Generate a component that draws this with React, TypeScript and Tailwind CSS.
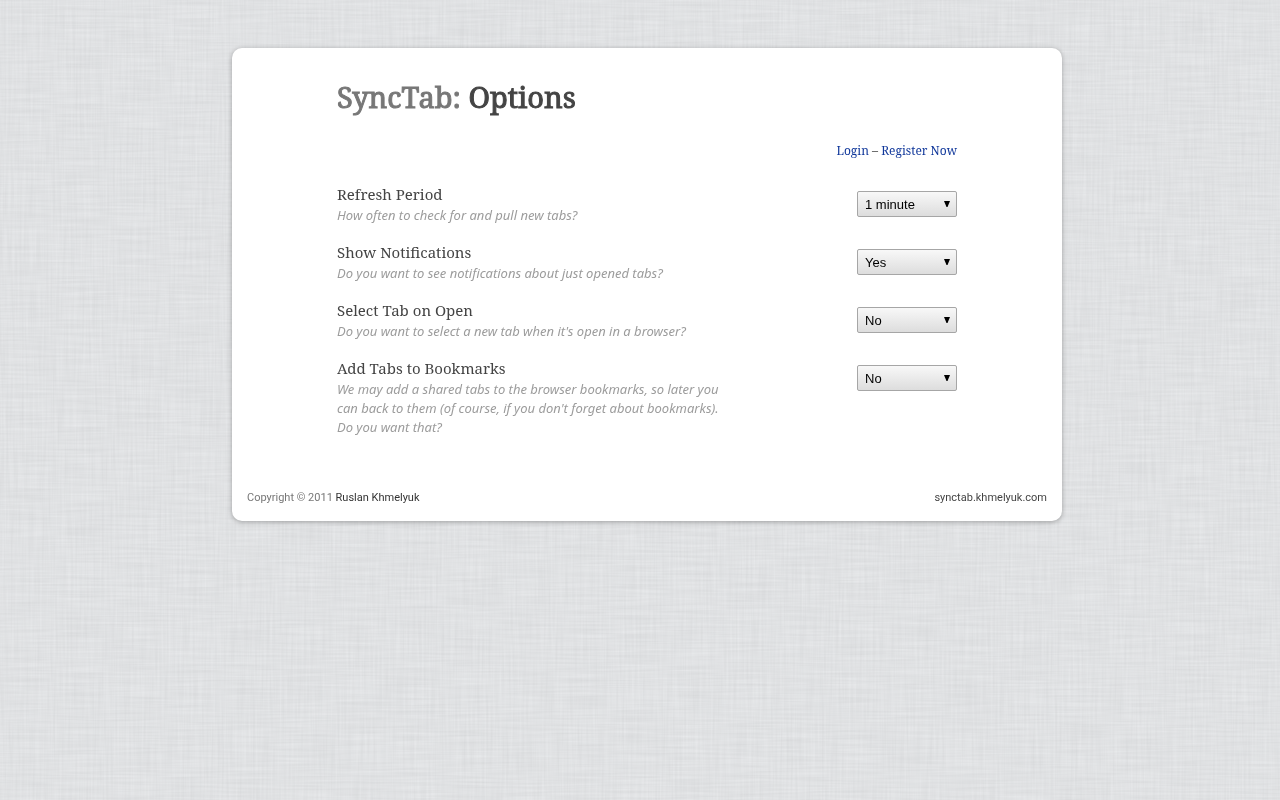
type Option = {
  id: string;
  title: string;
  description: string;
  value: string;
  choices: string[];
};

const options: Option[] = [
  {
    id: "refresh-period",
    title: "Refresh Period",
    description: "How often to check for and pull new tabs?",
    value: "1 minute",
    choices: ["1 minute", "5 minutes", "15 minutes"],
  },
  {
    id: "show-notifications",
    title: "Show Notifications",
    description: "Do you want to see notifications about just opened tabs?",
    value: "Yes",
    choices: ["Yes", "No"],
  },
  {
    id: "select-tab",
    title: "Select Tab on Open",
    description: "Do you want to select a new tab when it's open in a browser?",
    value: "No",
    choices: ["Yes", "No"],
  },
  {
    id: "add-bookmarks",
    title: "Add Tabs to Bookmarks",
    description:
      "We may add a shared tabs to the browser bookmarks, so later you can back to them (of course, if you don't forget about bookmarks). Do you want that?",
    value: "No",
    choices: ["Yes", "No"],
  },
];

/* Woven linen: fine horizontal and vertical threads over a flat grey. */
function Linen() {
  return (
    <svg className="fixed inset-0 -z-10 h-full w-full" aria-hidden="true">
      <defs>
        <filter id="warp" x="0" y="0" width="100%" height="100%" colorInterpolationFilters="sRGB">
          <feTurbulence type="fractalNoise" baseFrequency="0.45 0.018" numOctaves="2" seed="4" />
          <feColorMatrix values="0.1 0 0 0 0.829  0.1 0 0 0 0.835  0.1 0 0 0 0.842  0 0 0 0 1" />
        </filter>
        <filter id="weft" x="0" y="0" width="100%" height="100%" colorInterpolationFilters="sRGB">
          <feTurbulence type="fractalNoise" baseFrequency="0.018 0.45" numOctaves="2" seed="9" />
          <feColorMatrix values="0.1 0 0 0 0.829  0.1 0 0 0 0.835  0.1 0 0 0 0.842  0 0 0 0 1" />
        </filter>
      </defs>
      <rect width="100%" height="100%" filter="url(#warp)" />
      <rect width="100%" height="100%" filter="url(#weft)" opacity="0.5" />
    </svg>
  );
}

function OptionRow({ option }: { option: Option }) {
  return (
    <div className="flex items-start justify-between gap-4">
      <div className="max-w-[400px]">
        <label
          htmlFor={option.id}
          className="block pb-[2px] font-['Noto_Serif','Droid_Serif','Liberation_Serif',serif] text-[15px] leading-5 text-[#444]"
        >
          {option.title}
        </label>
        <p className="font-['Noto_Sans',sans-serif] text-[13px] leading-[19px] text-[#9c9c9c] italic">
          {option.description}
        </p>
      </div>
      <div className="relative mt-[7px] shrink-0">
        <select
          id={option.id}
          defaultValue={option.value}
          className="block h-[26px] w-[100px] appearance-none rounded-[2px] border border-[#a6a6a6] bg-linear-to-b from-[#f8f8f8] to-[#dddddd] pt-[2px] pr-5 pl-[7px] font-['Liberation_Sans',Arial,sans-serif] text-[13px] text-black"
        >
          {option.choices.map((choice) => (
            <option key={choice}>{choice}</option>
          ))}
        </select>
        <svg
          className="pointer-events-none absolute top-[10px] right-[7px] h-[6px] w-[6px]"
          viewBox="0 0 6 6"
          aria-hidden="true"
        >
          <path d="M0 0H6L3.5 6H2.5Z" fill="#000" />
        </svg>
      </div>
    </div>
  );
}

export default function App() {
  return (
    <div className="relative isolate min-h-screen bg-[#dfe1e3] pt-12 pb-12 pl-[14px]">
      <Linen />
      <div className="mx-auto w-full max-w-[830px] rounded-[10px] bg-white shadow-[0_1px_5px_rgba(0,0,0,0.3)]">
        <main className="mx-auto max-w-[620px] pt-7">
          <h1 className="font-['Noto_Serif','Droid_Serif','Liberation_Serif',serif] text-[29px] leading-[42px] font-normal text-[#444] [-webkit-text-stroke:1px]">
            <span className="text-[#777]">SyncTab:</span> Options
          </h1>
          <nav className="mt-[23px] text-right font-['Noto_Serif','Droid_Serif','Liberation_Serif',serif] text-[12px] leading-5 text-[#444]">
            <a href="#login" className="text-[#11389b]">
              Login
            </a>{" "}
            –{" "}
            <a href="#register" className="text-[#11389b]">
              Register Now
            </a>
          </nav>
          <form className="mt-[23px] flex flex-col gap-[17px]">
            {options.map((option) => (
              <OptionRow key={option.id} option={option} />
            ))}
          </form>
        </main>
        <footer className="mt-[51px] flex justify-between px-[15px] pb-[13px] font-[Roboto,sans-serif] text-[11px] leading-5 text-[#777]">
          <p>
            Copyright © 2011{" "}
            <a href="#author" className="text-[#333]">
              Ruslan Khmelyuk
            </a>
          </p>
          <a href="#site" className="text-[#444]">
            synctab.khmelyuk.com
          </a>
        </footer>
      </div>
    </div>
  );
}
